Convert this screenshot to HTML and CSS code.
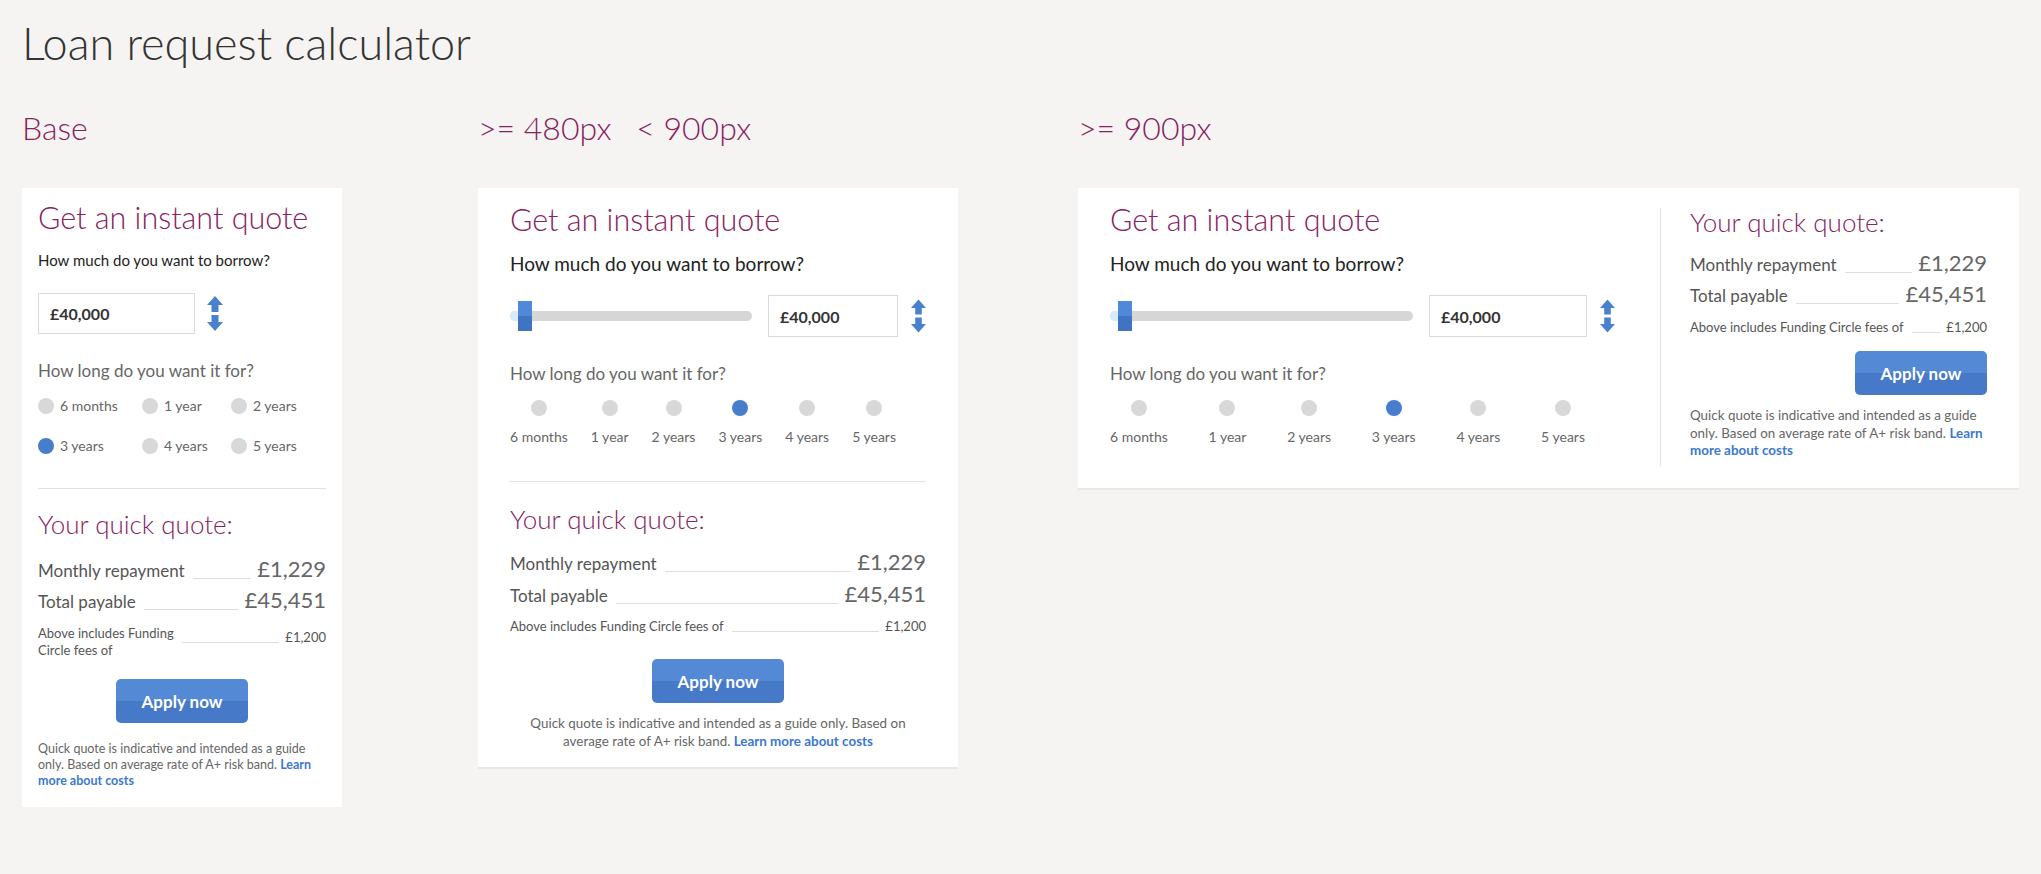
FILE: index.html
```html
<!DOCTYPE html>
<html lang="en">
<head>
    <meta charset="UTF-8">
    <meta name="viewport" content="width=device-width, initial-scale=1.0">
    <title>Loan request calculator</title>
    <link rel="stylesheet" href="styles.css">
</head>
<body>
    <h1 class="page-title">Loan request calculator</h1>

    <div class="columns">
        <!-- base / mobile -->
        <section class="col">
            <h2 class="col-label">Base</h2>
            <div class="card card-base">
                <h3 class="quote-title">Get an instant quote</h3>
                <p class="q-amount">How much do you want to borrow?</p>
                <div class="amount-row">
                    <div class="amount-input">£40,000</div>
                    <svg class="stepper" viewBox="0 0 16 35"><polygon points="8,0 16,9 11.5,9 11.5,16 4.5,16 4.5,9 0,9"/><polygon points="4.5,19 11.5,19 11.5,26 16,26 8,35 0,26 4.5,26"/></svg>
                </div>
                <p class="q-term">How long do you want it for?</p>
                <div class="terms-grid">
                    <span class="term"><span class="dot"></span>6 months</span>
                    <span class="term"><span class="dot"></span>1 year</span>
                    <span class="term"><span class="dot"></span>2 years</span>
                    <span class="term"><span class="dot on"></span>3 years</span>
                    <span class="term"><span class="dot"></span>4 years</span>
                    <span class="term"><span class="dot"></span>5 years</span>
                </div>
                <hr class="divider">
                <h3 class="result-title">Your quick quote:</h3>
                <div class="results">
                    <div class="row"><span class="r-label">Monthly repayment</span><span class="leader"></span><span class="r-value">£1,229</span></div>
                    <div class="row"><span class="r-label">Total payable</span><span class="leader"></span><span class="r-value">£45,451</span></div>
                    <div class="row fees"><span class="f-label">Above includes Funding Circle fees of</span><span class="leader"></span><span class="f-value">£1,200</span></div>
                </div>
                <div class="apply"><button class="btn-apply">Apply now</button></div>
                <p class="disclaimer">Quick quote is indicative and intended as a guide only. Based on average rate of A+ risk band. <a href="#">Learn more about costs</a></p>
            </div>
        </section>

        <!-- 480 - 900 -->
        <section class="col">
            <h2 class="col-label">&gt;= 480px <span class="gap">&lt; 900px</span></h2>
            <div class="card card-mid">
                <h3 class="quote-title">Get an instant quote</h3>
                <p class="q-amount">How much do you want to borrow?</p>
                <div class="amount-row">
                    <div class="slider"><div class="track"><span class="fill"></span><span class="thumb"></span></div></div>
                    <div class="amount-input">£40,000</div>
                    <svg class="stepper" viewBox="0 0 16 35"><polygon points="8,0 16,9 11.5,9 11.5,16 4.5,16 4.5,9 0,9"/><polygon points="4.5,19 11.5,19 11.5,26 16,26 8,35 0,26 4.5,26"/></svg>
                </div>
                <p class="q-term">How long do you want it for?</p>
                <div class="terms-line">
                    <span class="term"><span class="dot"></span>6 months</span>
                    <span class="term"><span class="dot"></span>1 year</span>
                    <span class="term"><span class="dot"></span>2 years</span>
                    <span class="term"><span class="dot on"></span>3 years</span>
                    <span class="term"><span class="dot"></span>4 years</span>
                    <span class="term"><span class="dot"></span>5 years</span>
                </div>
                <hr class="divider">
                <h3 class="result-title">Your quick quote:</h3>
                <div class="results">
                    <div class="row"><span class="r-label">Monthly repayment</span><span class="leader"></span><span class="r-value">£1,229</span></div>
                    <div class="row"><span class="r-label">Total payable</span><span class="leader"></span><span class="r-value">£45,451</span></div>
                    <div class="row fees"><span class="f-label">Above includes Funding Circle fees of</span><span class="leader"></span><span class="f-value">£1,200</span></div>
                </div>
                <div class="apply"><button class="btn-apply">Apply now</button></div>
                <p class="disclaimer">Quick quote is indicative and intended as a guide only. Based on average rate of A+ risk band. <a href="#">Learn more about costs</a></p>
            </div>
        </section>

        <!-- 900+ -->
        <section class="col">
            <h2 class="col-label">&gt;= 900px</h2>
            <div class="card card-wide">
                <div class="wide-left">
                    <h3 class="quote-title">Get an instant quote</h3>
                    <p class="q-amount">How much do you want to borrow?</p>
                    <div class="amount-row">
                        <div class="slider"><div class="track"><span class="fill"></span><span class="thumb"></span></div></div>
                        <div class="amount-input">£40,000</div>
                        <svg class="stepper" viewBox="0 0 16 35"><polygon points="8,0 16,9 11.5,9 11.5,16 4.5,16 4.5,9 0,9"/><polygon points="4.5,19 11.5,19 11.5,26 16,26 8,35 0,26 4.5,26"/></svg>
                    </div>
                    <p class="q-term">How long do you want it for?</p>
                    <div class="terms-line">
                        <span class="term"><span class="dot"></span>6 months</span>
                        <span class="term"><span class="dot"></span>1 year</span>
                        <span class="term"><span class="dot"></span>2 years</span>
                        <span class="term"><span class="dot on"></span>3 years</span>
                        <span class="term"><span class="dot"></span>4 years</span>
                        <span class="term"><span class="dot"></span>5 years</span>
                    </div>
                </div>
                <div class="wide-right">
                    <h3 class="result-title">Your quick quote:</h3>
                    <div class="results">
                        <div class="row"><span class="r-label">Monthly repayment</span><span class="leader"></span><span class="r-value">£1,229</span></div>
                        <div class="row"><span class="r-label">Total payable</span><span class="leader"></span><span class="r-value">£45,451</span></div>
                        <div class="row fees"><span class="f-label">Above includes Funding Circle fees of</span><span class="leader"></span><span class="f-value">£1,200</span></div>
                    </div>
                    <div class="apply"><button class="btn-apply">Apply now</button></div>
                    <p class="disclaimer">Quick quote is indicative and intended as a guide only. Based on average rate of A+ risk band. <a href="#">Learn more about costs</a></p>
                </div>
            </div>
        </section>
    </div>
</body>
</html>
```

FILE: styles.css
```css
body {
    margin: 0;
    padding: 0 22px;
    background: #f5f4f2;
    font-family: Lato, "Open Sans", sans-serif;
    color: #666;
}
p, h1, h2, h3 {
    margin: 0;
}
.page-title {
    margin-top: 16px;
    font-size: 45px;
    line-height: 54px;
    font-weight: 300;
    color: #333;
}
.columns {
    display: grid;
    grid-template-columns: 456px 600px 941px;
    align-items: start;
}
.col-label {
    margin-top: 39px;
    font-size: 32px;
    line-height: 38px;
    font-weight: 300;
    color: #88225f;
}
.col-label .gap {
    margin-left: 16px;
}
.card {
    margin-top: 41px;
    background: #fff;
    box-shadow: 0 2px 0 #eae8e5;
}
.card-base {
    width: 320px;
    box-sizing: border-box;
    padding: 10px 16px 18px;
}
.card-mid {
    width: 480px;
    box-sizing: border-box;
    padding: 12px 32px 17px;
}
.card-wide {
    display: grid;
    grid-template-columns: 1fr 327px;
    padding: 12px 32px 22px;
}

/* left side: question block */
.quote-title {
    font-size: 30.5px;
    line-height: 38px;
    font-weight: 300;
    color: #88225f;
}
.q-amount {
    margin-top: 14px;
    font-size: 15px;
    line-height: 20px;
    color: #222;
}
.card-mid .q-amount, .card-wide .q-amount {
    font-size: 19px;
    line-height: 24px;
}
.amount-row {
    display: flex;
    align-items: center;
    margin-top: 23px;
}
.card-mid .amount-row, .card-wide .amount-row {
    margin-top: 19px;
}
.amount-input {
    box-sizing: border-box;
    width: 157px;
    height: 41px;
    border: 1px solid #dadada;
    padding-left: 11px;
    display: flex;
    align-items: center;
    font-size: 16px;
    font-weight: 700;
    color: #333;
}
.card-mid .amount-input {
    width: 130px;
    height: 42px;
}
.card-wide .amount-input {
    width: 158px;
    height: 42px;
}
.stepper {
    width: 16px;
    height: 35px;
    margin-left: 12px;
    fill: #4a80cd;
}
.card-mid .stepper, .card-wide .stepper {
    width: 15px;
    height: 34px;
    margin-left: 13px;
}
.slider {
    flex: 1;
    margin-right: 16px;
}
.track {
    position: relative;
    height: 10px;
    border-radius: 5px;
    background: #d6d6d6;
}
.track .fill {
    position: absolute;
    left: 0;
    top: 0;
    width: 16px;
    height: 10px;
    border-radius: 5px 0 0 5px;
    background: #d8ebfb;
}
.track .thumb {
    position: absolute;
    left: 8px;
    top: -10px;
    width: 14px;
    height: 30px;
    background: linear-gradient(#4f8ad8 50%, #3f74c3 50%);
}
.q-term {
    margin-top: 26px;
    font-size: 17px;
    line-height: 22px;
    color: #666;
}
.terms-grid {
    display: grid;
    grid-template-columns: 104px 89px 1fr;
    row-gap: 16px;
    margin-top: 12px;
}
.terms-grid .term {
    display: flex;
    align-items: center;
    gap: 6px;
    height: 24px;
}
.term {
    font-size: 14px;
    line-height: 18px;
    color: #666;
}
.dot {
    width: 16px;
    height: 16px;
    border-radius: 50%;
    background: #d8d8d8;
    flex: none;
}
.dot.on {
    background: #477dcb;
}
.terms-line {
    display: flex;
    justify-content: space-between;
    margin-top: 15px;
    padding-right: 30px;
}
.terms-line .term {
    display: flex;
    flex-direction: column;
    align-items: center;
    gap: 12px;
}
.divider {
    margin: 30px 0 0;
    border: 0;
    border-top: 1px solid #e2e2e2;
}
.card-mid .divider {
    margin-top: 35px;
}

/* results */
.result-title {
    margin-top: 19px;
    font-size: 26px;
    line-height: 32px;
    font-weight: 300;
    color: #88225f;
}
.card-mid .result-title {
    margin-top: 21px;
}
.results {
    margin-top: 16px;
}
.card-mid .results, .card-wide .results {
    margin-top: 14px;
}
.row {
    display: flex;
    align-items: flex-end;
}
.row + .row {
    margin-top: 5px;
}
.card-mid .row + .row {
    margin-top: 6px;
}
.r-label {
    font-size: 17px;
    line-height: 22px;
    color: #555;
}
.r-value {
    font-size: 22px;
    line-height: 26px;
    color: #666;
}
.leader {
    flex: 1;
    margin: 0 6px 3px 8px;
    border-bottom: 1px solid #ddd;
}
.row.fees {
    margin-top: 12px;
}
.card-mid .row.fees {
    margin-top: 11px;
}
.f-label, .f-value {
    font-size: 13px;
    line-height: 17px;
    color: #555;
}
.card-base .row.fees {
    align-items: flex-start;
}
.card-base .f-label {
    width: 142px;
    flex: none;
}
.card-base .fees .leader {
    height: 17px;
    margin: 0 6px 0 2px;
}
.card-base .f-value {
    margin-top: 4px;
}
.apply {
    display: flex;
    justify-content: center;
    margin-top: 20px;
}
.card-mid .apply {
    margin-top: 24px;
}
.card-wide .apply {
    justify-content: flex-end;
    margin-top: 15px;
}
.btn-apply {
    width: 132px;
    height: 44px;
    border: 0;
    border-radius: 5px;
    background: linear-gradient(#5489d6 50%, #467ac8 50%);
    color: #fff;
    font-family: Lato, sans-serif;
    font-size: 17px;
    font-weight: 700;
}
.disclaimer {
    margin-top: 18px;
    font-size: 12.5px;
    line-height: 16px;
    color: #666;
}
.disclaimer a {
    color: #3b78cf;
    font-weight: 700;
    text-decoration: none;
}
.card-mid .disclaimer {
    margin-top: 11px;
    font-size: 13.4px;
    line-height: 18px;
    text-align: center;
}
.card-wide .disclaimer {
    margin-top: 12px;
    font-size: 13.4px;
    line-height: 17.5px;
}

/* wide layout columns */
.wide-left {
    padding-right: 45px;
}
.wide-right {
    margin-top: 8px;
    border-left: 1px solid #e2e2e2;
    padding: 0 0 6px 29px;
}
.wide-right .result-title {
    margin-top: 0;
    line-height: 28px;
}
```
